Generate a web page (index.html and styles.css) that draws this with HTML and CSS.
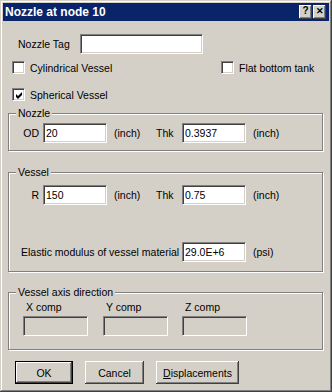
FILE: index.html
```html
<!DOCTYPE html>
<html lang="en">
<head>
    <meta charset="UTF-8">
    <title>Nozzle at node 10</title>
    <link rel="stylesheet" href="styles.css">
</head>
<body>
    <div class="window">
        <div class="titlebar">
            <span class="title">Nozzle at node 10</span>
            <span class="tb-btn">?</span>
            <span class="tb-btn tb-close">&#x2715;</span>
        </div>

        <div class="tag-row">
            <span class="tag-label">Nozzle Tag</span>
            <input type="text" class="edit tag-input" value="">
        </div>

        <div class="chk-row first">
            <label class="chk-item wide"><span class="chk"></span>Cylindrical Vessel</label>
            <label class="chk-item"><span class="chk"></span>Flat bottom tank</label>
        </div>
        <div class="chk-row second">
            <label class="chk-item">
                <span class="chk"><svg width="7" height="7" viewBox="0 0 7 7"><path d="M0 2 L2 4 L6 0 L6 3 L2 7 L0 5 Z" fill="#000"/></svg></span>Spherical Vessel
            </label>
        </div>

        <div class="group nozzle">
            <div class="group-title">Nozzle</div>
            <div class="field-row first-row">
                <span class="lbl">OD</span>
                <input type="text" class="edit num" value="20">
                <span class="unit">(inch)</span>
                <span class="lbl2">Thk</span>
                <input type="text" class="edit num" value="0.3937">
                <span class="unit">(inch)</span>
            </div>
        </div>

        <div class="group vessel">
            <div class="group-title">Vessel</div>
            <div class="field-row first-row">
                <span class="lbl">R</span>
                <input type="text" class="edit num" value="150">
                <span class="unit">(inch)</span>
                <span class="lbl2">Thk</span>
                <input type="text" class="edit num" value="0.75">
                <span class="unit">(inch)</span>
            </div>
            <div class="field-row elastic-row">
                <span class="lbl-long">Elastic modulus of vessel material</span>
                <input type="text" class="edit num" value="29.0E+6">
                <span class="unit">(psi)</span>
            </div>
        </div>

        <div class="group axis">
            <div class="group-title">Vessel axis direction</div>
            <div class="axis-grid">
                <div class="axis-col">
                    <span class="axis-lbl">X comp</span>
                    <input type="text" class="edit axis-input" disabled>
                </div>
                <div class="axis-col">
                    <span class="axis-lbl">Y comp</span>
                    <input type="text" class="edit axis-input" disabled>
                </div>
                <div class="axis-col">
                    <span class="axis-lbl">Z comp</span>
                    <input type="text" class="edit axis-input" disabled>
                </div>
            </div>
        </div>

        <div class="buttons">
            <button class="btn btn-default">OK</button>
            <button class="btn btn-cancel">Cancel</button>
            <button class="btn btn-disp"><u>D</u>isplacements</button>
        </div>
    </div>
</body>
</html>
```

FILE: styles.css
```css
body {
    margin: 0;
    font-family: "Liberation Sans", Arial, sans-serif;
    font-size: 10.5px;
    color: #000;
    background: #d4d0c8;
    white-space: nowrap;
}
.window {
    width: 332px;
    height: 392px;
    box-sizing: border-box;
    padding: 3px;
    background: #d4d0c8;
    box-shadow: inset -1px -1px #404040, inset 1px 1px #d4d0c8, inset -2px -2px #808080, inset 2px 2px #fff;
}
.titlebar {
    height: 18px;
    display: flex;
    align-items: center;
    padding-left: 2px;
    background: #0a246a;
    color: #fff;
}
.title {
    flex: 1;
    font-weight: bold;
    font-size: 12px;
}
.tb-btn {
    width: 13px;
    height: 14px;
    box-sizing: border-box;
    background: #d4d0c8;
    color: #000;
    font-weight: bold;
    font-size: 10px;
    line-height: 12px;
    text-align: center;
    box-shadow: inset -1px -1px #404040, inset 1px 1px #fff, inset -2px -2px #808080;
}
.tb-close {
    margin-left: 1px;
    margin-right: 3px;
    font-size: 9px;
}
.edit {
    box-sizing: border-box;
    height: 20px;
    margin: 0;
    padding: 0 2px;
    font-family: inherit;
    font-size: 10.5px;
    color: #000;
    background: #fff;
    border: 1px solid;
    border-color: #808080 #fff #fff #808080;
    box-shadow: inset 1px 1px #404040, inset -1px -1px #d4d0c8;
    outline: none;
}
.edit:disabled {
    background: #d4d0c8;
}
.tag-row {
    display: flex;
    align-items: center;
    margin-top: 13px;
    height: 20px;
}
.tag-label {
    width: 62px;
    margin-left: 15px;
}
.tag-input {
    width: 123px;
}
.chk-row {
    display: flex;
    align-items: center;
    height: 13px;
    padding-left: 9px;
}
.chk-row.first {
    margin-top: 7px;
}
.chk-row.second {
    margin-top: 14px;
}
.chk-item {
    display: flex;
    align-items: center;
}
.chk-item.wide {
    width: 209px;
}
.chk {
    width: 13px;
    height: 13px;
    box-sizing: border-box;
    margin-right: 5px;
    display: flex;
    align-items: center;
    justify-content: center;
    background: #fff;
    border: 1px solid;
    border-color: #808080 #fff #fff #808080;
    box-shadow: inset 1px 1px #404040, inset -1px -1px #d4d0c8;
}
.chk svg {
    margin-left: 1px;
    margin-top: 1px;
}
.group {
    width: 315px;
    box-sizing: border-box;
    margin-left: 5px;
    border: 1px solid #808080;
    box-shadow: inset 1px 1px #fff, 1px 1px #fff;
}
.group-title {
    display: table;
    margin: -7px 0 0 7px;
    padding: 0 2px;
    line-height: 13px;
    background: #d4d0c8;
}
.nozzle {
    margin-top: 12px;
    padding-bottom: 7px;
}
.vessel {
    margin-top: 21px;
    padding-bottom: 9px;
}
.axis {
    margin-top: 20px;
    padding-bottom: 13px;
}
.field-row {
    display: flex;
    align-items: center;
    height: 20px;
}
.first-row {
    margin-top: 3px;
}
.vessel .first-row {
    margin-top: 6px;
}
.elastic-row {
    margin-top: 37px;
}
.lbl {
    width: 30px;
    padding-right: 4px;
    text-align: right;
}
.lbl2 {
    width: 26px;
}
.lbl-long {
    width: 161px;
    padding-left: 12px;
}
.num {
    width: 64px;
}
.unit {
    width: 42px;
    margin-left: 7px;
}
.axis-grid {
    display: grid;
    grid-template-columns: 80px 79px 65px;
    margin-top: 2px;
    padding-left: 14px;
}
.axis-col {
    display: flex;
    flex-direction: column;
}
.axis-lbl {
    line-height: 13px;
    padding-left: 3px;
    margin-bottom: 2px;
}
.axis-input {
    width: 65px;
}
.buttons {
    display: flex;
    gap: 12px;
    margin-top: 11px;
    padding-left: 12px;
}
.btn {
    height: 23px;
    box-sizing: border-box;
    margin: 0;
    padding: 0;
    font-family: inherit;
    font-size: 10.5px;
    color: #000;
    background: #d4d0c8;
    border: none;
    box-shadow: inset -1px -1px #404040, inset 1px 1px #fff, inset -2px -2px #808080, inset 2px 2px #d4d0c8;
}
.btn-default {
    width: 58px;
    border: 1px solid #000;
    box-shadow: inset -1px -1px #404040, inset 1px 1px #fff, inset -2px -2px #808080;
}
.btn-cancel {
    width: 59px;
}
.btn-disp {
    width: 83px;
}
```
